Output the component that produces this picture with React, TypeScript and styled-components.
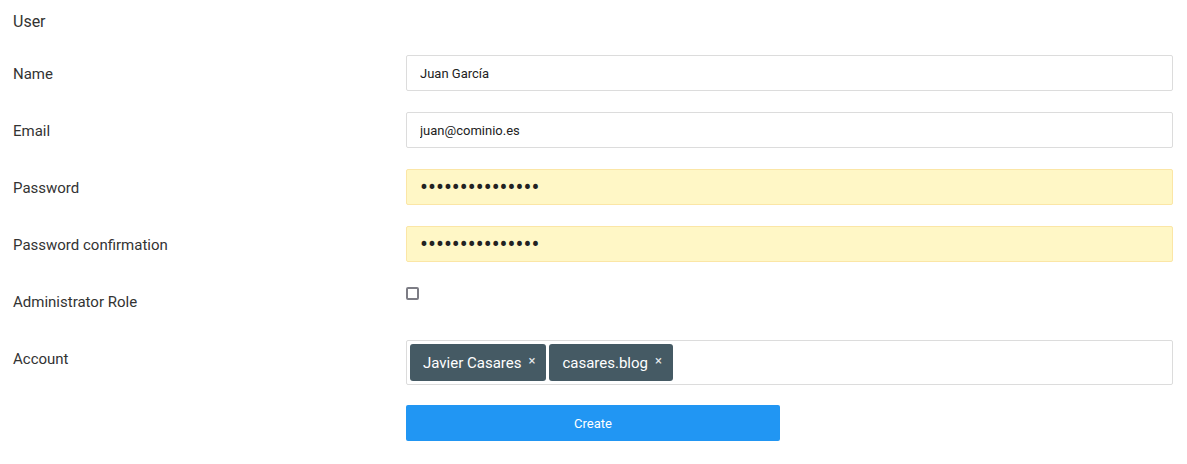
import { createGlobalStyle, styled } from "styled-components"

const GlobalStyle = createGlobalStyle`
  body {
    margin: 0;
    background: #ffffff;
    font-family: Roboto, "Liberation Sans", sans-serif;
    color: #333333;
  }
  * { box-sizing: border-box; }
`

const Page = styled.div`
  padding: 11px 14px 0 13px;
`

const Heading = styled.div`
  font-size: 16px;
  line-height: 22px;
  margin-bottom: 22px;
`

const Form = styled.form`
  display: grid;
  grid-template-columns: 393px 1fr;
  row-gap: 21px;
`

const Label = styled.label`
  font-size: 15px;
  line-height: 36px;
  margin: 1px 0 -1px;
  color: #333333;
`

const Field = styled.div`
  display: flex;
  align-items: flex-start;
  min-height: 36px;
`

const TextInput = styled.input<{ $filled?: boolean }>`
  width: 100%;
  height: 36px;
  padding: 0 13px;
  border: 1px solid ${(p) => (p.$filled ? "#fbe6a6" : "#dcdcdc")};
  border-radius: 2px;
  background: ${(p) => (p.$filled ? "#fff7c6" : "#ffffff")};
  font-family: Roboto, "Liberation Sans", sans-serif;
  font-size: ${(p) => (p.$filled ? "23.6px" : "13px")};
  color: #222222;
  outline: none;
`

const Check = styled.input`
  width: 13px;
  height: 13px;
  margin: 4px 0 0;
  appearance: none;
  border: 2px solid #7d7d85;
  border-radius: 2px;
  background: #fff;
`

const TagBox = styled.div`
  width: 100%;
  height: 45px;
  border: 1px solid #dcdcdc;
  border-radius: 2px;
  display: flex;
  align-items: center;
  gap: 3px;
  padding: 0 3px;
`

const Tag = styled.span`
  display: inline-flex;
  align-items: center;
  height: 37px;
  padding: 0 11px 0 13px;
  background: #455a64;
  border-radius: 3px;
  color: #ffffff;
  font-size: 15px;
`

const TagClose = styled.span`
  font-size: 13px;
  margin-left: 7px;
  position: relative;
  top: -2px;
  color: #e6eaec;
`

const Button = styled.button`
  width: 374px;
  height: 36px;
  margin-top: -1px;
  border: none;
  border-radius: 2px;
  background: #2196f3;
  color: #ffffff;
  font-family: Roboto, "Liberation Sans", sans-serif;
  font-size: 13px;
  cursor: pointer;
`

const Spacer = styled.div``

function App() {
  return (
    <Page>
      <GlobalStyle />
      <Heading>User</Heading>
      <Form onSubmit={(e) => e.preventDefault()}>
        <Label>Name</Label>
        <Field>
          <TextInput type="text" defaultValue="Juan García" />
        </Field>

        <Label>Email</Label>
        <Field>
          <TextInput type="email" defaultValue="juan@cominio.es" />
        </Field>

        <Label>Password</Label>
        <Field>
          <TextInput $filled type="password" defaultValue="secretpassword1" />
        </Field>

        <Label>Password confirmation</Label>
        <Field>
          <TextInput $filled type="password" defaultValue="secretpassword1" />
        </Field>

        <Label>Administrator Role</Label>
        <Field>
          <Check type="checkbox" />
        </Field>

        <Label>Account</Label>
        <Field>
          <TagBox>
            <Tag>
              Javier Casares<TagClose>×</TagClose>
            </Tag>
            <Tag>
              casares.blog<TagClose>×</TagClose>
            </Tag>
          </TagBox>
        </Field>

        <Spacer />
        <Field>
          <Button type="submit">Create</Button>
        </Field>
      </Form>
    </Page>
  )
}

export default App
